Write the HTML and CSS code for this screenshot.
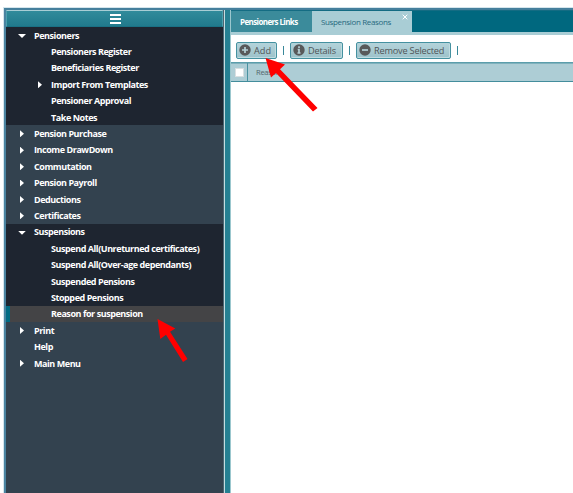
FILE: index.html
```html
<!DOCTYPE html>
<html lang="en">
<head>
<meta charset="utf-8">
<title>Pensioners</title>
<link rel="stylesheet" href="styles.css">
</head>
<body>
<div class="app">
  <aside class="sidebar">
    <div class="menu-toggle"><span class="burger"><i></i><i></i><i></i></span></div>
    <ul class="nav">
      <li class="dark open"><span>Pensioners</span></li>
      <li class="dark sub"><span>Pensioners Register</span></li>
      <li class="dark sub"><span>Beneficiaries Register</span></li>
      <li class="dark sub closed"><span>Import From Templates</span></li>
      <li class="dark sub"><span>Pensioner Approval</span></li>
      <li class="dark sub"><span>Take Notes</span></li>
      <li class="closed"><span>Pension Purchase</span></li>
      <li class="closed"><span>Income DrawDown</span></li>
      <li class="closed"><span>Commutation</span></li>
      <li class="closed"><span>Pension Payroll</span></li>
      <li class="closed"><span>Deductions</span></li>
      <li class="closed"><span>Certificates</span></li>
      <li class="dark open"><span>Suspensions</span></li>
      <li class="dark sub"><span>Suspend All(Unreturned certificates)</span></li>
      <li class="dark sub"><span>Suspend All(Over-age dependants)</span></li>
      <li class="dark sub"><span>Suspended Pensions</span></li>
      <li class="dark sub"><span>Stopped Pensions</span></li>
      <li class="sub selected"><span>Reason for suspension</span></li>
      <li class="closed"><span>Print</span></li>
      <li><span>Help</span></li>
      <li class="closed"><span>Main Menu</span></li>
    </ul>
  </aside>
  <div class="splitter"></div>
  <main class="content">
    <div class="tabs">
      <div class="tab tab-links">Pensioners Links</div>
      <div class="tab tab-active">Suspension Reasons
        <svg class="close" viewBox="0 0 6 6"><path d="M.7.7l4.600 4.600M5.300.7L.7 5.300"/></svg>
      </div>
    </div>
    <div class="toolbar">
      <button class="btn btn-add"><svg viewBox="0 0 12 12"><circle cx="6" cy="6" r="5.7"/><path d="M6 3v6M3 6h6"/></svg><span>Add</span></button>
      <i class="sep"></i>
      <button class="btn btn-details"><svg viewBox="0 0 12 12"><circle cx="6" cy="6" r="5.7"/><path d="M6 2.3v1.8M4.700 5.500H6v3.400M4.500 9h3"/></svg><span>Details</span></button>
      <i class="sep"></i>
      <button class="btn btn-remove"><svg viewBox="0 0 12 12"><circle cx="6" cy="6" r="5.7"/><path d="M3 6h6"/></svg><span>Remove Selected</span></button>
      <i class="sep"></i>
    </div>
    <div class="grid-head">
      <div class="check"><i></i></div>
      <div class="column">Reason</div>
    </div>
  </main>
</div>
<svg class="arrows" viewBox="0 0 573 493">
  <path d="M265.500 58l19.500 6.500-5 4.700L317.500 108l-4.500 3.500-37-38.500-5 4.500z"/>
  <path d="M157.500 319l17.800 9.500-5.300 3.300L187.500 359l-4.500 3-17-27.200-5.700 4.200z"/>
</svg>
</body>
</html>
```
FILE: styles.css
```css
* { box-sizing: border-box; }
body {
  margin: 0;
  height: 493px;
  overflow: hidden;
  background: #fff;
  font-family: "Open Sans", "Noto Sans", sans-serif;
}
.app {
  display: flex;
  height: 485px;
  margin: 8px 0 0 4px;
  border-top: 2px solid #457f9c;
  border-left: 2px solid #4a83a0;
  box-shadow: 0 0 0 1px #d5e5ec;
}
.sidebar {
  flex: 0 0 218px;
  background: #33424f;
  border-right: 1px solid #4b6672;
}
.menu-toggle {
  display: flex;
  justify-content: center;
  align-items: center;
  height: 17px;
  padding-left: 2px;
  border: 1px solid #4ba0ae;
  border-top-color: #a9ced5;
  border-bottom-color: #1a7184;
  background: linear-gradient(#318b9b, #217a8c);
}
.burger { display: flex; flex-direction: column; gap: 2px; }
.burger i { width: 11px; height: 2px; background: #fff; }
.nav { list-style: none; margin: 0; padding: 0; }
.nav li {
  display: flex;
  align-items: center;
  position: relative;
  height: 16.4px;
  padding-left: 28px;
  color: #fff;
  font-size: 9px;
  font-weight: 700;
  letter-spacing: -0.44px;
  white-space: nowrap;
}
.nav .dark { background: #1e2530; }
.nav .sub { padding-left: 45px; }
.nav .selected { background: #444446; box-shadow: inset 4px 0 #006b83; }
.nav .open::before,
.nav .closed::before {
  content: "";
  position: absolute;
  left: 14px;
  top: 5px;
  width: 4px;
  height: 7px;
  background: #fff;
  clip-path: polygon(0 0, 100% 50%, 0 100%);
}
.nav .open::before {
  left: 12px;
  top: 7px;
  width: 8px;
  height: 4px;
  clip-path: polygon(0 0, 100% 0, 50% 100%);
}
.nav .sub.closed::before { left: 32px; }
.splitter {
  flex: 0 0 7px;
  border-left: 1px solid #c5dce0;
  border-right: 1px solid #9bc7ce;
  background: #268092;
}
.content { flex: 1; min-width: 0; }
.tabs {
  display: flex;
  height: 25px;
  border-top: 1px solid #146c83;
  border-bottom: 3px solid #a9cdd5;
  background: #00687f;
}
.tab {
  position: relative;
  height: 21px;
  line-height: 22px;
  padding-left: 9px;
  font-size: 8px;
  white-space: nowrap;
}
.tab-links {
  width: 81px;
  background: #3b8b9b;
  color: #fff;
  font-weight: 700;
  letter-spacing: -0.6px;
}
.tab-active {
  width: 100px;
  background: #a9cdd5;
  color: #27697e;
  font-weight: 500;
  letter-spacing: -0.35px;
}
.close {
  position: absolute;
  top: 3px;
  right: 4px;
  width: 6px;
  height: 6px;
  stroke: #fff;
  stroke-width: 1;
}
.toolbar {
  display: flex;
  align-items: center;
  height: 27px;
  padding: 3px 0 0 5px;
}
.btn {
  display: flex;
  align-items: center;
  gap: 3px;
  height: 17px;
  padding: 0 0 0 2px;
  border: 1px solid #4591a0;
  border-radius: 2px;
  background: linear-gradient(#b4d3da, #9cc2ca);
  box-shadow: inset -1px -1px #c0dce1;
  color: #505557;
  font: 500 9.2px "Open Sans", "Noto Sans", sans-serif;
  letter-spacing: -0.2px;
  white-space: nowrap;
}
.btn svg { flex: none; width: 12px; height: 12px; fill: #58595a; }
.btn path { fill: none; stroke: #b4d0d6; stroke-width: 1.7; }
.btn-add { width: 41px; letter-spacing: 0; }
.btn-details { width: 53px; }
.btn-remove { width: 95px; }
.sep { width: 1px; height: 9px; margin: 0 6px; background: #39889a; }
.grid-head {
  display: flex;
  height: 20px;
  border-top: 1px solid #5b9dab;
  border-bottom: 1px solid #438d9c;
  background: #adcdd5;
  box-shadow: inset 0 1px #7fb1bc;
}
.check {
  display: flex;
  align-items: center;
  width: 17px;
  padding-left: 4px;
  border-right: 1px solid #4a92a1;
}
.check i { width: 9px; height: 9px; background: #fff; border: 1px solid #d9dfe1; }
.column {
  padding-left: 8px;
  line-height: 19px;
  font-size: 7.6px;
  letter-spacing: -0.3px;
  color: #53676d;
}
.arrows {
  position: absolute;
  left: 0;
  top: 0;
  width: 573px;
  height: 493px;
  fill: #f00;
  pointer-events: none;
}
```
